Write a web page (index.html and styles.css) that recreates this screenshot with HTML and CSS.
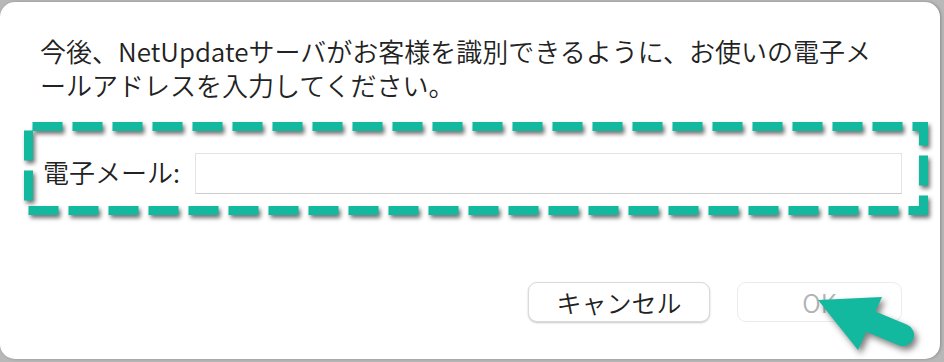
FILE: index.html
```html
<!DOCTYPE html>
<html lang="ja">
<head>
<meta charset="utf-8">
<title>NetUpdate</title>
<link rel="stylesheet" href="styles.css">
</head>
<body>
<div class="window">
  <p class="message">今後、NetUpdateサーバがお客様を識別できるように、お使いの電子メ<br>ールアドレスを入力してください。</p>
  <div class="field-row">
    <label class="field-label" for="email">電子メール:</label>
    <input class="field-input" id="email" type="text">
  </div>
  <div class="button-row">
    <button class="btn btn-cancel">キャンセル</button>
    <button class="btn btn-ok" disabled>OK</button>
  </div>
</div>
<svg class="annotations" width="944" height="362" viewBox="0 0 944 362" xmlns="http://www.w3.org/2000/svg">
  <rect class="dash-box" x="28.5" y="126.5" width="895" height="84"/>
  <g class="arrow">
    <line x1="903" y1="335" x2="850" y2="313" stroke-width="22" stroke-linecap="round"/>
    <polygon points="818,300 882,297 858,350"/>
  </g>
</svg>
</body>
</html>
```
FILE: styles.css
```css
html, body {
  margin: 0;
  padding: 0;
}
body {
  width: 944px;
  height: 362px;
  background: #b8b8b8;
  position: relative;
  overflow: hidden;
  font-family: "Noto Sans CJK JP", "Noto Sans", sans-serif;
  font-weight: 350;
  color: #222222;
}
.window {
  margin: 2px 4px 0 0;
  height: 357px;
  background: #ffffff;
  border-radius: 15px;
  box-shadow: 1px 0 3px rgba(0, 0, 0, 0.25);
  display: flex;
  flex-direction: column;
  box-sizing: border-box;
  padding-top: 32px;
}
.message {
  margin: 0 0 0 40px;
  font-size: 26px;
  line-height: 34px;
  white-space: nowrap;
}
.field-row {
  display: flex;
  align-items: center;
  margin-top: 51px;
  padding-left: 43px;
}
.field-label {
  flex: none;
  width: 152px;
  font-size: 26px;
  line-height: 34px;
  margin-top: -3px;
}
.field-input {
  flex: none;
  width: 707px;
  height: 41px;
  box-sizing: border-box;
  border: 1px solid #e3e3e3;
  border-bottom-color: #cdcdcd;
  background: #fff;
  margin: 0;
  padding: 0 8px;
  font: inherit;
  font-size: 22px;
  outline: none;
}
.button-row {
  display: flex;
  justify-content: flex-end;
  gap: 27px;
  margin-top: 88px;
  padding-right: 38px;
}
.btn {
  height: 40px;
  box-sizing: border-box;
  border-radius: 9px;
  background: #ffffff;
  font-family: "Noto Sans CJK JP", "Noto Sans", sans-serif;
  font-weight: 350;
  font-size: 25px;
  line-height: 36px;
  padding: 0;
  margin: 0;
}
.btn-cancel {
  width: 182px;
  border: 1px solid #dadada;
  box-shadow: 0 1px 2px rgba(0, 0, 0, 0.22);
  color: #222;
}
.btn-ok {
  width: 165px;
  border: 1px solid #ececec;
  color: #b3b3b3;
}
.annotations {
  position: absolute;
  left: 0;
  top: 0;
  pointer-events: none;
}
.dash-box {
  fill: none;
  stroke: #13b99f;
  stroke-width: 9;
  stroke-dasharray: 30 10;
  stroke-dashoffset: -4;
  filter: drop-shadow(2px 3px 2px rgba(0, 0, 0, 0.55));
}
.arrow {
  fill: #13b99f;
  stroke: #13b99f;
  filter: drop-shadow(3px 4px 3px rgba(0, 0, 0, 0.5));
}
.arrow polygon {
  stroke: none;
}
```
